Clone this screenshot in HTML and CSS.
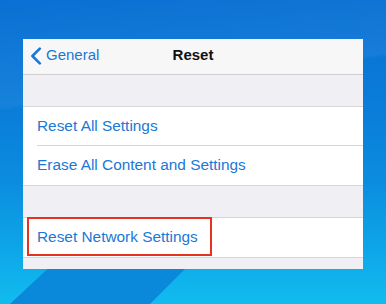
FILE: index.html
```html
<!DOCTYPE html>
<html>
<head>
<meta charset="utf-8">
<link rel="stylesheet" href="styles.css">
</head>
<body>
<div class="wedge"></div>
<div class="panel">
  <div class="nav">
    <div class="back">
      <svg class="chev" width="12" height="18" viewBox="0 0 12 18"><path d="M9.8 1.6 L2.4 9 L9.8 16.4" fill="none" stroke="#1a78d6" stroke-width="2.6" stroke-linecap="round" stroke-linejoin="round"/></svg>
      <span>General</span>
    </div>
    <div class="title">Reset</div>
    <div></div>
  </div>
  <div class="spacer"></div>
  <div class="group">
    <div class="row"><div class="cell sep">Reset All Settings</div></div>
    <div class="row"><div class="cell">Erase All Content and Settings</div></div>
  </div>
  <div class="spacer"></div>
  <div class="group">
    <div class="row"><div class="cell">Reset Network Settings</div></div>
  </div>
  <div class="spacer bottom"></div>
  <div class="highlight"></div>
</div>
</body>
</html>
```
FILE: styles.css
```css
html, body {
  margin: 0;
  padding: 0;
}
body {
  width: 386px;
  height: 304px;
  overflow: hidden;
  position: relative;
  font-family: "Liberation Sans", Arial, sans-serif;
  background:
    linear-gradient(172deg, rgba(255,255,255,0) 0%, rgba(255,255,255,0.05) 30%, rgba(255,255,255,0) 31%),
    linear-gradient(to bottom, #0a70d3 0%, #0a7cd9 35%, #0b8ddf 60%, #0ea6e8 82%, #11bcef 100%);
}
.wedge {
  position: absolute;
  left: 0;
  top: 0;
  width: 386px;
  height: 304px;
  background: #0a88d9;
  clip-path: polygon(10px 304px, 55px 262px, 192px 262px, 150px 304px);
}
.panel {
  position: relative;
  width: 340px;
  margin: 39px auto 0;
  background: #efeff4;
}
.nav {
  display: grid;
  grid-template-columns: 1fr auto 1fr;
  align-items: center;
  height: 35px;
  background: #f7f7f8;
  border-bottom: 1px solid #cfcfd3;
}
.back {
  display: flex;
  align-items: center;
  gap: 4px;
  padding-left: 7px;
  padding-bottom: 3px;
  color: #1a78d6;
  font-size: 15px;
  line-height: 32px;
}
.chev {
  display: block;
  margin-top: 1px;
}
.title {
  font-size: 15px;
  font-weight: bold;
  color: #111;
  line-height: 32px;
  padding-bottom: 3px;
}
.spacer {
  height: 31px;
}
.spacer.bottom {
  height: 11px;
}
.group {
  background: #fff;
  border-top: 1px solid #d6d6da;
  border-bottom: 1px solid #d6d6da;
}
.row {
  padding-left: 14px;
}
.cell {
  height: 39px;
  line-height: 38px;
  font-size: 15.4px;
  color: #1a78d6;
}
.cell.sep {
  height: 38px;
  border-bottom: 1px solid #d6d6da;
}
.highlight {
  position: absolute;
  left: 4px;
  top: 178px;
  width: 181px;
  height: 35px;
  border: 2px solid #e5331f;
}
```
